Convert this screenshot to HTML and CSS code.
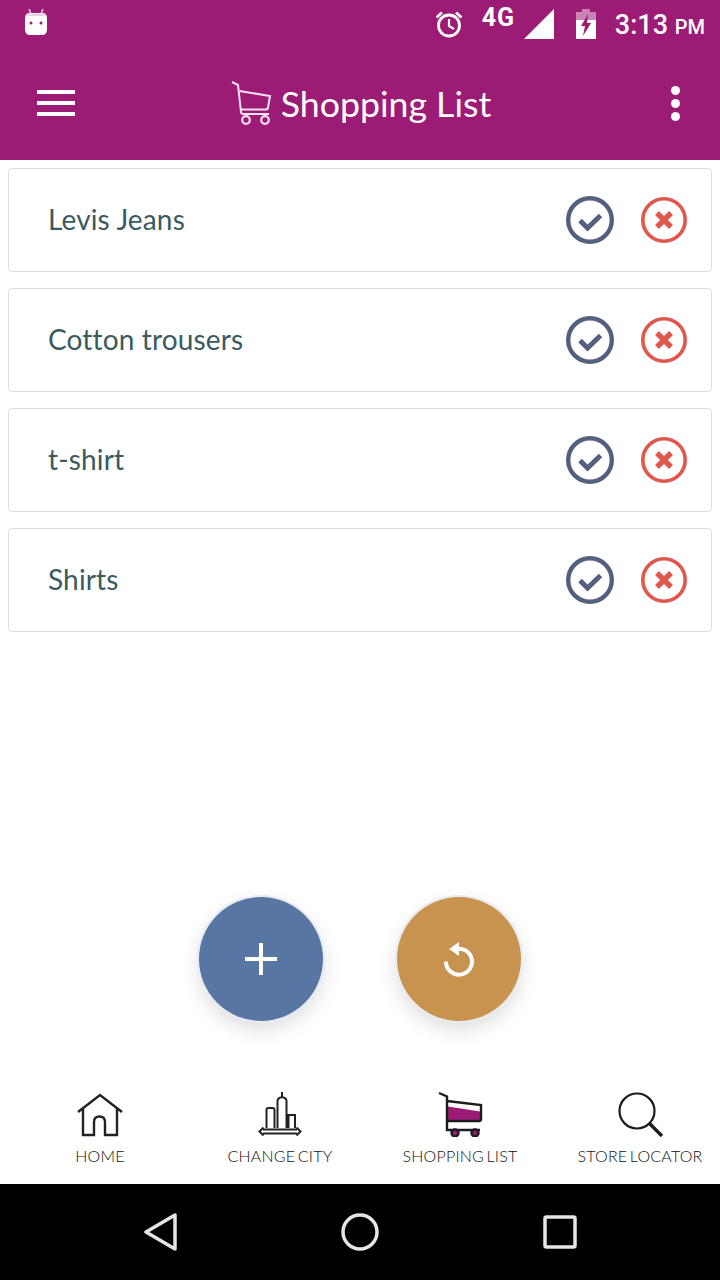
FILE: index.html
```html
<!DOCTYPE html>
<html lang="en">
<head>
<meta charset="utf-8">
<title>Shopping List</title>
<link rel="stylesheet" href="styles.css">
</head>
<body>
<div class="app">
  <header class="header">
    <div class="status">
      <svg class="st-android" viewBox="0 0 24 28"><path d="M5 1l2 5M19 1l-2 5" stroke="#e8c8df" stroke-width="1.500" fill="none"/><path d="M1 10q0-5 5-5h12q5 0 5 5v11q0 6-5 6H6q-5 0-5-6z" fill="#fff"/><path d="M3 5.800h18v2H3z" fill="#e8c8df"/><circle cx="7" cy="15" r="1.500" fill="#9c1b74"/><circle cx="17" cy="15" r="1.500" fill="#9c1b74"/></svg>
      <div class="st-spacer"></div>
      <svg class="st-alarm" viewBox="0 0 28 28"><circle cx="14" cy="15.500" r="10.500" fill="none" stroke="#fff" stroke-width="2.800"/><path d="M14 9v7l5 3" fill="none" stroke="#fff" stroke-width="2.200"/><path d="M1.500 7.500L7 2.500M26.500 7.500L21 2.500" stroke="#fff" stroke-width="2.800" fill="none"/></svg>
      <span class="st-4g">4G</span>
      <svg class="st-signal" viewBox="0 0 30 30"><path d="M0 30L30 0v30z" fill="#fff"/></svg>
      <svg class="st-batt" viewBox="0 0 20 30"><path d="M6 0h8v3h6v8H0V3h6z" fill="#c983b5"/><path d="M0 11h20v19H0z" fill="#fff"/><path d="M12 5L5 17h4l-2 10 8-13h-4z" fill="#9c1b74"/></svg>
      <span class="st-time">3:13 <small>PM</small></span>
    </div>
    <div class="toolbar">
      <div class="burger"><i></i><i></i><i></i></div>
      <div class="title">
        <svg class="title-cart" viewBox="0 0 42 44"><path d="M1 1l6 3 3 27q.2 2 2.200 2H38" fill="none" stroke="#f7e3f0" stroke-width="2"/><path d="M8.500 10L39 15l-2 11.500q-.3 2-2.500 2H10" fill="none" stroke="#f7e3f0" stroke-width="2"/><circle cx="15" cy="39" r="3.800" fill="none" stroke="#f7e3f0" stroke-width="2.200"/><circle cx="34" cy="39" r="3.800" fill="none" stroke="#f7e3f0" stroke-width="2.200"/></svg>
        <span>Shopping List</span>
      </div>
      <div class="dots"><i></i><i></i><i></i></div>
    </div>
  </header>

  <main class="main">
    <ul class="list">
      <li class="card"><span class="name">Levis Jeans</span><svg class="ok" viewBox="0 0 48 48"><circle cx="24" cy="24" r="21.800" fill="none" stroke="#53617f" stroke-width="4.400"/><path d="M14 24.500l7.500 7.500 13-12.500" fill="none" stroke="#53617f" stroke-width="5"/></svg><svg class="no" viewBox="0 0 46 46"><circle cx="23" cy="23" r="21.200" fill="none" stroke="#e0574c" stroke-width="3.600"/><path d="M16 16l14 14M30 16L16 30" fill="none" stroke="#e0574c" stroke-width="5.500"/></svg></li>
      <li class="card"><span class="name">Cotton trousers</span><svg class="ok" viewBox="0 0 48 48"><circle cx="24" cy="24" r="21.800" fill="none" stroke="#53617f" stroke-width="4.400"/><path d="M14 24.500l7.500 7.500 13-12.500" fill="none" stroke="#53617f" stroke-width="5"/></svg><svg class="no" viewBox="0 0 46 46"><circle cx="23" cy="23" r="21.200" fill="none" stroke="#e0574c" stroke-width="3.600"/><path d="M16 16l14 14M30 16L16 30" fill="none" stroke="#e0574c" stroke-width="5.500"/></svg></li>
      <li class="card"><span class="name">t-shirt</span><svg class="ok" viewBox="0 0 48 48"><circle cx="24" cy="24" r="21.800" fill="none" stroke="#53617f" stroke-width="4.400"/><path d="M14 24.500l7.500 7.500 13-12.500" fill="none" stroke="#53617f" stroke-width="5"/></svg><svg class="no" viewBox="0 0 46 46"><circle cx="23" cy="23" r="21.200" fill="none" stroke="#e0574c" stroke-width="3.600"/><path d="M16 16l14 14M30 16L16 30" fill="none" stroke="#e0574c" stroke-width="5.500"/></svg></li>
      <li class="card"><span class="name">Shirts</span><svg class="ok" viewBox="0 0 48 48"><circle cx="24" cy="24" r="21.800" fill="none" stroke="#53617f" stroke-width="4.400"/><path d="M14 24.500l7.500 7.500 13-12.500" fill="none" stroke="#53617f" stroke-width="5"/></svg><svg class="no" viewBox="0 0 46 46"><circle cx="23" cy="23" r="21.200" fill="none" stroke="#e0574c" stroke-width="3.600"/><path d="M16 16l14 14M30 16L16 30" fill="none" stroke="#e0574c" stroke-width="5.500"/></svg></li>
    </ul>
    <div class="fabs">
      <div class="fab fab-blue"><svg class="fab-plus" viewBox="0 0 32 32"><path d="M16 0v32M0 16h32" stroke="#fff" stroke-width="4" fill="none"/></svg></div>
      <div class="fab fab-gold"><svg class="fab-undo" viewBox="0 0 32 36"><path d="M11.500 8.500A13 13 0 1 1 3 20.500" fill="none" stroke="#fff" stroke-width="4"/><path d="M16 1v14L6 8z" fill="#fff"/></svg></div>
    </div>
  </main>

  <nav class="tabs">
    <div class="tab">
      <svg class="tab-icon" viewBox="0 0 48 46"><path d="M2 21L24 4l22 17" fill="none" stroke="#222" stroke-width="2.400"/><path d="M7 17v27h11V31q0-5.500 5.500-5.500T29 31v13h12V17" fill="none" stroke="#222" stroke-width="2.400"/></svg>
      <span>HOME</span>
    </div>
    <div class="tab">
      <svg class="tab-icon" viewBox="0 0 44 46"><path d="M8.500 37V19q0-2 2-2h4q2 0 2 2v18M19.500 37V10q0-3 4.500-4 4.500 1 4.500 4v27M30.500 37V24h6.500v13M24 6V1" fill="none" stroke="#222" stroke-width="2"/><path d="M5 38.500h34M5 42.500h34" stroke="#222" stroke-width="1.800" fill="none"/><path d="M5.500 36.500L1.500 40.500l4 4M38.500 36.500l4 4-4 4" fill="none" stroke="#222" stroke-width="2"/></svg>
      <span>CHANGE CITY</span>
    </div>
    <div class="tab">
      <svg class="tab-icon" viewBox="0 0 44 46"><path d="M10 15.500l32 5v8.500H10z" fill="#9c1b74"/><path d="M1 2l8 3.500V39h33" fill="none" stroke="#1c1c1c" stroke-width="2.400"/><path d="M9 10l34 4v14q0 2-2 2H9" fill="none" stroke="#1c1c1c" stroke-width="2.400"/><circle cx="17" cy="42" r="3.500" fill="#9c1b74" stroke="#1c1c1c" stroke-width="2.400"/><circle cx="37" cy="42" r="3.500" fill="#9c1b74" stroke="#1c1c1c" stroke-width="2.400"/></svg>
      <span>SHOPPING LIST</span>
    </div>
    <div class="tab">
      <svg class="tab-icon" viewBox="0 0 46 46"><circle cx="20" cy="20" r="17.500" fill="none" stroke="#1c1c1c" stroke-width="2.200"/><path d="M32.500 32.500L45 45" stroke="#1c1c1c" stroke-width="3.400" fill="none"/></svg>
      <span>STORE LOCATOR</span>
    </div>
  </nav>

  <footer class="sysnav">
    <svg class="sys-back" viewBox="0 0 34 38"><path d="M3 19L32 2v34z" fill="none" stroke="#e6e6e6" stroke-width="3.500" stroke-linejoin="round"/></svg>
    <svg class="sys-home" viewBox="0 0 38 38"><circle cx="19" cy="19" r="17" fill="none" stroke="#e6e6e6" stroke-width="3.500"/></svg>
    <svg class="sys-recent" viewBox="0 0 34 34"><rect x="2" y="2" width="30" height="30" rx="1.500" fill="none" stroke="#e6e6e6" stroke-width="3.500"/></svg>
  </footer>
</div>
</body>
</html>
```

FILE: styles.css
```css
* { box-sizing: border-box; }
html, body { margin: 0; padding: 0; }
body { font-family: "Lato", "Liberation Sans", sans-serif; background: #fff; }
.app { width: 720px; height: 1280px; display: flex; flex-direction: column; overflow: hidden; }

.header { height: 160px; background: #9c1b74; color: #fff; flex: none; }
.status { height: 48px; display: flex; align-items: center; padding: 0 15px 0 24px; }
.st-android { width: 24px; height: 28px; margin-top: -4px; }
.st-spacer { flex: 1; }
.st-alarm { width: 28px; height: 28px; margin-top: -1px; }
.st-4g { font-family: "Roboto", sans-serif; font-weight: 700; font-size: 25px; letter-spacing: .8px; margin: -14px 0 0 19px; width: 36px; }
.st-signal { width: 30px; height: 30px; margin: 0 0 0 6px; }
.st-batt { width: 20px; height: 30px; margin: 0 0 0 22px; }
.st-time { font-family: "Roboto", sans-serif; font-weight: 500; font-size: 27px; margin: 2px 0 0 19px; color: #fff; }
.st-time small { font-size: 20px; }

.toolbar { height: 112px; display: flex; align-items: center; justify-content: space-between; padding: 0 40px 0 37px; }
.burger { width: 38px; display: flex; flex-direction: column; gap: 7px; margin-top: -2px; }
.burger i { display: block; height: 4px; background: #fff; }
.dots { display: flex; flex-direction: column; gap: 4px; margin-top: -2px; }
.dots i { display: block; width: 9px; height: 9px; border-radius: 50%; background: #fff; }
.title { display: flex; align-items: center; gap: 8px; font-size: 35.7px; font-weight: 400; line-height: 44px; margin: 0 0 0 -24px; }
.title-cart { width: 42px; height: 44px; margin-top: -2px; }

.main { flex: 1; display: flex; flex-direction: column; min-height: 0; }
.list { list-style: none; margin: 0; padding: 8px 8px 0; display: flex; flex-direction: column; gap: 16px; }
.card { height: 104px; border: 1px solid #dedede; border-radius: 4px; display: flex; align-items: center; padding: 0 24px 0 39px; }
.name { flex: 1; font-size: 28px; letter-spacing: .15px; color: #3a5a60; margin-top: -2px; }
.ok { width: 48px; height: 48px; margin-right: 27px; }
.no { width: 46px; height: 46px; }

.fabs { margin-top: auto; height: 124px; display: flex; justify-content: center; gap: 74px; margin-bottom: 59px; }
.fab { width: 124px; height: 124px; border-radius: 50%; display: flex; align-items: center; justify-content: center; box-shadow: 0 0 0 2px #e8ecf1, 0 8px 20px rgba(0,0,0,.14); }
.fab-blue { background: #5876a4; }
.fab-gold { background: #c8934e; }
.fab-plus { width: 32px; height: 32px; }
.fab-undo { width: 32px; height: 36px; }

.tabs { height: 104px; display: grid; grid-template-columns: repeat(4, 180px); padding-left: 10px; flex: none; }
.tab { display: flex; flex-direction: column; align-items: center; padding-top: 11px; }
.tab-icon { width: 48px; height: 46px; }
.tab span { font-size: 16px; font-weight: 300; letter-spacing: .2px; word-spacing: -2px; color: #111; margin-top: 9px; white-space: nowrap; }

.sysnav { height: 96px; background: #000; flex: none; display: flex; align-items: center; justify-content: center; gap: 164px; }
.sys-back { width: 34px; height: 38px; }
.sys-home { width: 38px; height: 38px; }
.sys-recent { width: 34px; height: 34px; }
```
